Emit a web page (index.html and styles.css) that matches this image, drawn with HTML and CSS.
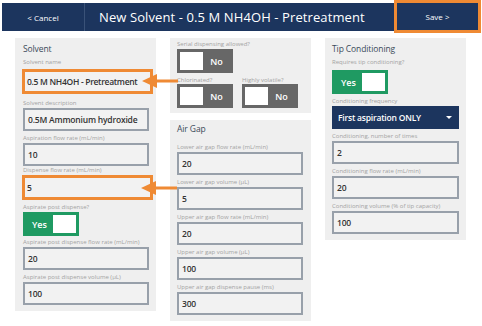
FILE: index.html
```html
<!DOCTYPE html>
<html lang="en">
<head>
<meta charset="utf-8">
<title>New Solvent</title>
<link rel="stylesheet" href="styles.css">
</head>
<body>
<header class="topbar">
  <div class="cancel">&lt; Cancel</div>
  <div class="title">New Solvent - 0.5 M NH4OH - Pretreatment</div>
  <div class="save">Save &gt;</div>
</header>
<main class="content">
  <section class="col">
    <div class="panel panel-solvent">
      <h2>Solvent</h2>
      <div class="field">
        <label>Solvent name</label>
        <div class="input hl hl-first">0.5 M NH4OH - Pretreatment</div>
      </div>
      <div class="field">
        <label>Solvent description</label>
        <div class="input">0.5M Ammonium hydroxide</div>
      </div>
      <div class="field">
        <label>Aspiration flow rate (mL/min)</label>
        <div class="input">10</div>
      </div>
      <div class="field field-tight">
        <label>Dispense flow rate (mL/min)</label>
        <div class="input hl">5</div>
      </div>
      <div class="field">
        <label>Aspirate post dispense?</label>
        <div class="toggle yes"><span class="tlabel">Yes</span><span class="knob"></span></div>
      </div>
      <div class="field field-after-toggle">
        <label>Aspirate post dispense flow rate (mL/min)</label>
        <div class="input">20</div>
      </div>
      <div class="field">
        <label>Aspirate post dispense volume (µL)</label>
        <div class="input">100</div>
      </div>
    </div>
  </section>
  <section class="col col-mid">
    <div class="panel panel-flags">
      <div class="field">
        <label>Serial dispensing allowed?</label>
        <div class="toggle no"><span class="knob"></span><span class="tlabel">No</span></div>
      </div>
      <div class="trow">
        <div class="field">
          <label>Chlorinated?</label>
          <div class="toggle no"><span class="knob"></span><span class="tlabel">No</span></div>
        </div>
        <div class="field">
          <label>Highly volatile?</label>
          <div class="toggle no"><span class="knob"></span><span class="tlabel">No</span></div>
        </div>
      </div>
    </div>
    <div class="panel panel-airgap">
      <h2>Air Gap</h2>
      <div class="field">
        <label>Lower air gap flow rate (mL/min)</label>
        <div class="input">20</div>
      </div>
      <div class="field">
        <label>Lower air gap volume (µL)</label>
        <div class="input">5</div>
      </div>
      <div class="field">
        <label>Upper air gap flow rate (mL/min)</label>
        <div class="input">20</div>
      </div>
      <div class="field">
        <label>Upper air gap volume (µL)</label>
        <div class="input">100</div>
      </div>
      <div class="field">
        <label>Upper air gap dispense pause (ms)</label>
        <div class="input">300</div>
      </div>
    </div>
  </section>
  <section class="col">
    <div class="panel panel-tip">
      <h2>Tip Conditioning</h2>
      <div class="field">
        <label>Requires tip conditioning?</label>
        <div class="toggle yes"><span class="tlabel">Yes</span><span class="knob"></span></div>
      </div>
      <div class="field">
        <label>Conditioning frequency</label>
        <div class="select"><span>First aspiration ONLY</span><span class="caret"></span></div>
      </div>
      <div class="field">
        <label>Conditioning, number of times</label>
        <div class="input">2</div>
      </div>
      <div class="field">
        <label>Conditioning flow rate (mL/min)</label>
        <div class="input">20</div>
      </div>
      <div class="field">
        <label>Conditioning volume (% of tip capacity)</label>
        <div class="input">100</div>
      </div>
    </div>
  </section>
</main>
<svg class="arrow arrow-1" width="36" height="16" viewBox="0 0 36 16" aria-hidden="true"><path d="M0 8 L15 1 L15 15 Z" fill="#ef8a34"/><rect x="13" y="6.5" width="23" height="3" fill="#ef8a34"/></svg>
<svg class="arrow arrow-2" width="36" height="16" viewBox="0 0 36 16" aria-hidden="true"><path d="M0 8 L15 1 L15 15 Z" fill="#ef8a34"/><rect x="13" y="6.5" width="23" height="3" fill="#ef8a34"/></svg>
</body>
</html>
```
FILE: styles.css
```css
* { box-sizing: border-box; }
html, body { margin: 0; padding: 0; }
body {
  width: 482px;
  height: 326px;
  overflow: hidden;
  position: relative;
  background: #ffffff;
  font-family: "Open Sans", "Noto Sans", sans-serif;
  color: #333;
}
.topbar {
  display: flex;
  height: 28px;
  margin: 3px 1px 0 2px;
  background: #1c355e;
  color: #ffffff;
}
.cancel {
  width: 83px;
  display: flex;
  align-items: center;
  justify-content: center;
  font-size: 8px;
  border-right: 1px solid #3a5278;
}
.title {
  flex: 1;
  display: flex;
  align-items: center;
  padding-left: 14px;
  font-size: 13px;
  letter-spacing: 0.1px;
}
.save {
  width: 87px;
  margin: -3px 0 -2px;
  border: 3px solid #ef8a34;
  display: flex;
  align-items: center;
  justify-content: center;
  font-size: 8px;
}
.content {
  display: flex;
  align-items: flex-start;
  gap: 14px;
  margin-top: 7px;
  padding-left: 15px;
}
.col { width: 141px; display: flex; flex-direction: column; gap: 7px; }
.panel {
  background: #efefef;
  padding: 5px 7px 6px 8px;
}
.panel h2 {
  margin: 0;
  font-size: 8.5px;
  font-weight: 500;
  line-height: 12px;
  letter-spacing: -0.1px;
  color: #3b4a5a;
}
.field label {
  display: block;
  height: 12px;
  padding-top: 3px;
  font-size: 6px;
  line-height: 8px;
  color: #a3a3a3;
  white-space: nowrap;
}
.input {
  height: 23px;
  border: 2px solid #98a0aa;
  background: #f2f2f2;
  display: flex;
  align-items: center;
  padding-left: 3px;
  font-size: 8.5px;
  font-weight: 600;
  letter-spacing: -0.2px;
  white-space: nowrap;
  color: #333;
}
.input.hl {
  height: 25px;
  border: 3px solid #ef8a34;
  margin: 0 -4px 0 -1px;
  padding-left: 2px;
  letter-spacing: -0.3px;
}
.input.hl-first { margin-top: 2px; margin-bottom: 2px; }
.field-tight { margin-top: -3px; }
.field-after-toggle { margin-top: -1px; }
.toggle {
  width: 56px;
  height: 24px;
  display: flex;
  align-items: stretch;
  padding: 3px;
  color: #ffffff;
  font-size: 9px;
  font-weight: 600;
}
.toggle.yes { background: #1f9a62; }
.toggle.no { background: #676767; }
.tlabel { flex: 1; display: flex; align-items: center; justify-content: center; }
.knob { width: 23px; background: #ffffff; }
.panel-flags { padding: 0 7px 5px 7px; }
.panel-flags .field label { height: 11px; padding-top: 2px; }
.panel-flags .trow .field label { height: 11px; padding-top: 3px; }
.trow { display: flex; gap: 9px; }
.panel-airgap { padding: 3px 8px 6px 7px; }
.panel-airgap h2 { margin-bottom: 5px; }
.panel-tip { padding: 5px 7px 6px 7px; }
.panel-tip .toggle { margin-top: 3px; }
.select {
  height: 23px;
  background: #1c355e;
  color: #ffffff;
  display: flex;
  align-items: center;
  justify-content: space-between;
  padding: 0 7px 0 6px;
  font-size: 8.5px;
  font-weight: 600;
  letter-spacing: -0.2px;
}
.caret {
  width: 0;
  height: 0;
  border-left: 3px solid transparent;
  border-right: 3px solid transparent;
  border-top: 3px solid #ffffff;
}
.arrow { position: absolute; }
.arrow-1 { left: 142px; top: 73px; }
.arrow-2 { left: 141px; top: 180px; }
```
